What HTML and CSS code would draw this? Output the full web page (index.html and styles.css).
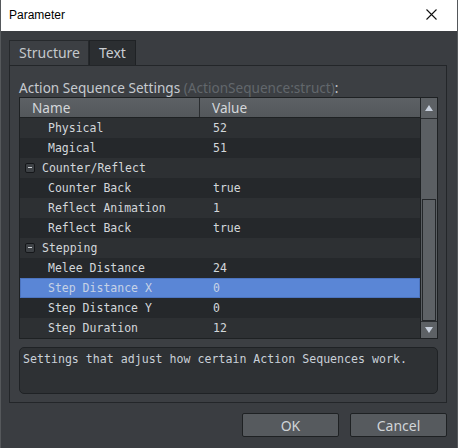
FILE: index.html
```html
<!DOCTYPE html>
<html lang="en">
<head>
  <meta charset="UTF-8">
  <title>Parameter</title>
  <link rel="stylesheet" href="styles.css">
</head>
<body>

<div class="window">
  <!-- Title bar -->
  <header class="titlebar">
    <span class="title">Parameter</span>
    <span class="close">
      <svg width="11" height="11" viewBox="0 0 11 11"><path d="M0.5 0.5 L10.5 10.5 M10.5 0.5 L0.5 10.5" stroke="#111" stroke-width="1.1" fill="none"/></svg>
    </span>
  </header>

  <div class="body">
    <nav class="tabs">
      <div class="tab active">Structure</div>
      <div class="tab">Text</div>
    </nav>

    <section class="panel">
      <div class="caption">Action Sequence Settings <span class="type">(ActionSequence:struct)</span>:</div>

      <div class="grid">
        <div class="table">
          <div class="thead">
            <div class="col-name">Name</div>
            <div class="col-value">Value</div>
          </div>
          <div class="row"><div class="name sub">Physical</div><div class="value">52</div></div>
          <div class="row"><div class="name sub">Magical</div><div class="value">51</div></div>
          <div class="row"><div class="name group"><span class="toggle"></span>Counter/Reflect</div><div class="value"></div></div>
          <div class="row"><div class="name sub">Counter Back</div><div class="value">true</div></div>
          <div class="row"><div class="name sub">Reflect Animation</div><div class="value">1</div></div>
          <div class="row"><div class="name sub">Reflect Back</div><div class="value">true</div></div>
          <div class="row"><div class="name group"><span class="toggle"></span>Stepping</div><div class="value"></div></div>
          <div class="row"><div class="name sub">Melee Distance</div><div class="value">24</div></div>
          <div class="row selected"><div class="name sub">Step Distance X</div><div class="value">0</div></div>
          <div class="row"><div class="name sub">Step Distance Y</div><div class="value">0</div></div>
          <div class="row"><div class="name sub">Step Duration</div><div class="value">12</div></div>
        </div>

        <div class="scrollbar">
          <div class="sb-btn"><span class="arrow up"></span></div>
          <div class="sb-track"><div class="sb-thumb"></div></div>
          <div class="sb-btn"><span class="arrow down"></span></div>
        </div>
      </div>

      <div class="help">Settings that adjust how certain Action Sequences work.</div>
    </section>

    <footer class="buttons">
      <button class="btn">OK</button>
      <button class="btn">Cancel</button>
    </footer>
  </div>
</div>

</body>
</html>
```

FILE: styles.css
```css
body {
  margin: 0;
  width: 458px;
  height: 448px;
  overflow: hidden;
  background: #3a3d41;
  font-family: 'Noto Sans', 'DejaVu Sans', sans-serif;
}

.window {
  display: flex;
  flex-direction: column;
  height: 448px;
  border-left: 1px solid #55585b;
  border-right: 1px solid #55585b;
  box-sizing: border-box;
}

.titlebar {
  height: 31px;
  background: #fff;
  display: flex;
  align-items: center;
  justify-content: space-between;
  padding: 0 20px 0 8px;
}

.title {
  font-family: 'Liberation Sans', Arial, sans-serif;
  font-size: 12px;
  color: #000;
  margin-top: -1px;
}

.close {
  display: flex;
  margin-top: -2px;
}

.body {
  padding: 9px 10px 0 8px;
}

/* tabs */
.tabs {
  display: flex;
  height: 25px;
}

.tab {
  font-size: 14px;
  color: #c9cdd1;
  padding: 0 9px 0 9px;
  line-height: 24px;
  background: #2b2e31;
  border: 1px solid #1f2225;
  border-bottom: none;
}

.tab.active {
  background: #3c3f43;
  color: #c4c8cc;
  padding: 0 8px 0 9px;
  border-color: #26292c;
}

/* main panel */
.panel {
  background: #3c3f43;
  border: 1px solid #232629;
  padding: 13px 8px 8px 9px;
  display: flex;
  flex-direction: column;
}

.caption {
  font-size: 13.6px;
  line-height: 18px;
  color: #c6cacf;
}

.caption .type {
  color: #62676c;
}

.grid {
  display: flex;
  border: 1px solid #1e2123;
  height: 240px;
}

.table {
  width: 401px;
  border-right: 1px solid #1e2123;
  display: flex;
  flex-direction: column;
}

.thead {
  display: flex;
  height: 19px;
  border-bottom: 1px solid #1e2123;
  background: linear-gradient(#5d6165, #53575b);
  font-size: 13.6px;
  color: #d4d7da;
  line-height: 19px;
}

.col-name {
  width: 167px;
  padding-left: 12px;
  border-right: 1px solid #2a2d30;
}

.col-value {
  padding-left: 12px;
}

.row {
  display: flex;
  height: 20px;
  line-height: 20px;
  font-family: 'DejaVu Sans Mono', monospace;
  font-size: 11.5px;
  color: #d3d7db;
  background: #2d3033;
}

.row:nth-child(odd) {
  background: #25282b;
}

.row.selected {
  background: #5a86d6;
  box-shadow: inset 0 0 0 1px #4c74bf;
  color: #c6d2e6;
}

.name {
  width: 180px;
  display: flex;
  align-items: center;
}

.name.sub {
  padding-left: 28px;
  width: 152px;
}

.name.group {
  padding-left: 5px;
  width: 175px;
}

.toggle {
  width: 8px;
  height: 8px;
  margin-right: 7px;
  border: 1px solid #15171a;
  border-radius: 2px;
  background: #3d4145;
  position: relative;
}

.toggle::after {
  content: '';
  position: absolute;
  left: 2px;
  top: 3px;
  width: 4px;
  height: 1px;
  background: #d0d4d8;
}

.value {
  padding-left: 13px;
}

/* scrollbar */
.scrollbar {
  width: 16px;
  display: flex;
  flex-direction: column;
  background: #5b5f63;
}

.sb-btn {
  height: 20px;
  background: #5d6165;
  display: flex;
  align-items: center;
  justify-content: center;
  border-bottom: 1px solid #2a2d30;
}

.sb-btn:last-child {
  border-bottom: none;
  border-top: 1px solid #2a2d30;
  height: 16px;
}

.arrow {
  width: 0;
  height: 0;
  border-left: 4px solid transparent;
  border-right: 4px solid transparent;
}

.arrow.up {
  border-bottom: 6px solid #c9d1de;
}

.arrow.down {
  border-top: 6px solid #c9d1de;
}

.sb-track {
  flex: 1;
  display: flex;
  flex-direction: column;
  justify-content: flex-end;
  padding: 0 1px 0 1px;
}

.sb-thumb {
  height: 122px;
  background: #5e6266;
  border: 1px solid #24272a;
  box-sizing: border-box;
}

/* description */
.help {
  margin-top: 8px;
  height: 47px;
  background: #2e3134;
  border: 1px solid #1f2225;
  border-radius: 5px;
  font-family: 'DejaVu Sans Mono', monospace;
  font-size: 11.6px;
  color: #c9d0d8;
  padding: 4px 3px;
  box-sizing: border-box;
}

/* dialog buttons */
.buttons {
  display: flex;
  justify-content: flex-end;
  gap: 11px;
  margin-top: 10px;
}

.btn {
  width: 97px;
  height: 24px;
  background: #565a5e;
  border: 1px solid #1e2123;
  border-radius: 2px;
  color: #d0d4d8;
  font-family: 'Noto Sans', sans-serif;
  font-size: 14px;
  padding: 0;
}
```
